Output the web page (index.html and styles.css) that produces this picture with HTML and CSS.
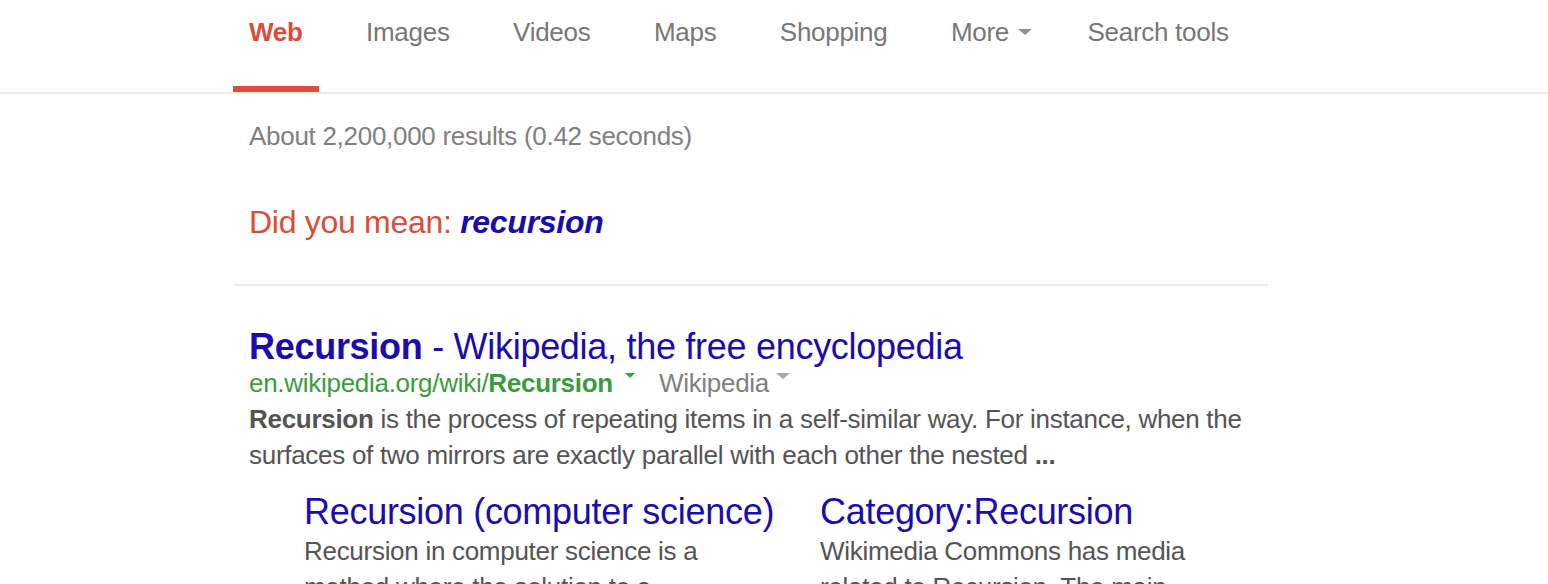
FILE: index.html
```html
<!DOCTYPE html>
<html lang="en">
<head>
<meta charset="utf-8">
<title>recurison - Google Search</title>
<link rel="stylesheet" href="styles.css">
</head>
<body>
<div class="tabbar">
  <nav class="tabs">
    <a class="tab tab-active">Web</a>
    <a class="tab">Images</a>
    <a class="tab">Videos</a>
    <a class="tab">Maps</a>
    <a class="tab">Shopping</a>
    <a class="tab tab-more">More<span class="caret caret-more"></span></a>
    <a class="tab">Search tools</a>
  </nav>
</div>
<main class="results">
  <div class="stats">About 2,200,000 results (0.42 seconds)</div>
  <div class="spell">Did you mean: <a class="spell-link">recursion</a></div>
  <div class="divider"></div>
  <div class="result">
    <h3 class="result-title"><b>Recursion</b> - Wikipedia, the free encyclopedia</h3>
    <div class="result-url">
      <cite class="cite">en.wikipedia.org/wiki/<b>Recursion</b></cite><span class="caret caret-green"></span><span class="source">Wikipedia</span><span class="caret caret-gray"></span>
    </div>
    <div class="snippet"><b>Recursion</b> is the process of repeating items in a self-similar way. For instance, when the surfaces of two mirrors are exactly parallel with each other the nested <b>...</b></div>
    <div class="sitelinks">
      <div class="sitelink">
        <a class="sitelink-title">Recursion (computer science)</a>
        <div class="sitelink-text">Recursion in computer science is a method where the solution to a problem depends on solutions to smaller instances of the same problem.</div>
      </div>
      <div class="sitelink">
        <a class="sitelink-title">Category:Recursion</a>
        <div class="sitelink-text">Wikimedia Commons has media related to Recursion. The main article for this category is Recursion.</div>
      </div>
    </div>
  </div>
</main>
</body>
</html>
```
FILE: styles.css
```css
* { box-sizing: border-box; }
html, body { margin: 0; padding: 0; background: #fff; }
body {
  font-family: "Liberation Sans", Arial, sans-serif;
  letter-spacing: -0.018em;
  color: #545454;
}
a { text-decoration: none; cursor: pointer; }

.tabbar { border-bottom: 2px solid #ebebeb; }
.tabs {
  display: flex;
  gap: 31.5px;
  margin-left: 233px;
  height: 92px;
}
.tab {
  display: block;
  height: 92px;
  padding: 17px 16px 0;
  font-size: 26px;
  line-height: 30px;
  color: #777;
  border-bottom: 6px solid transparent;
  white-space: nowrap;
}
.tab-active { color: #dd4b39; font-weight: bold; border-bottom-color: #dd4b39; }
.tab-more { padding-right: 8px; }

.caret { display: inline-block; width: 0; height: 0; border-style: solid; border-color: transparent; vertical-align: top; }
.caret-more { border-width: 6px 7px 0; border-top-color: #909090; margin: 12px 0 0 9px; }
.caret-green { border-width: 5px 5px 0; border-top-color: #3d9b3d; margin: 5px 0 0 12px; }
.caret-gray { border-width: 6px 7px 0; border-top-color: #a8a8a8; margin: 5px 0 0 7px; }

.results { margin-left: 233px; width: 1035px; }
.stats {
  padding-left: 16px;
  margin-top: 27px;
  font-size: 26px;
  line-height: 30px;
  color: #808080;
}
.spell {
  padding-left: 16px;
  margin-top: 52px;
  font-size: 32px;
  line-height: 38px;
  color: #dd4b39;
}
.spell-link { color: #1a0dab; font-weight: bold; font-style: italic; }
.divider { margin-top: 43px; height: 2px; background: #ebebeb; }

.result { padding-left: 16px; margin-top: 40px; }
.result-title {
  margin: 0;
  font-size: 36px;
  line-height: 42px;
  font-weight: normal;
  color: #1a0dab;
  white-space: nowrap;
}
.result-url {
  font-size: 26px;
  line-height: 30px;
  white-space: nowrap;
}
.cite { font-style: normal; color: #3d9b3d; }
.source { color: #808080; margin-left: 24px; }
.snippet {
  margin-top: 3px;
  font-size: 26px;
  line-height: 36px;
  color: #545454;
  width: 1010px;
}
.sitelinks {
  display: grid;
  grid-template-columns: 420px 420px;
  column-gap: 96px;
  margin: 18px 0 0 55px;
}
.sitelink-title {
  display: block;
  font-size: 36px;
  line-height: 42px;
  color: #1a0dab;
  white-space: nowrap;
}
.sitelink-text {
  font-size: 26px;
  line-height: 36px;
  color: #545454;
}
```
